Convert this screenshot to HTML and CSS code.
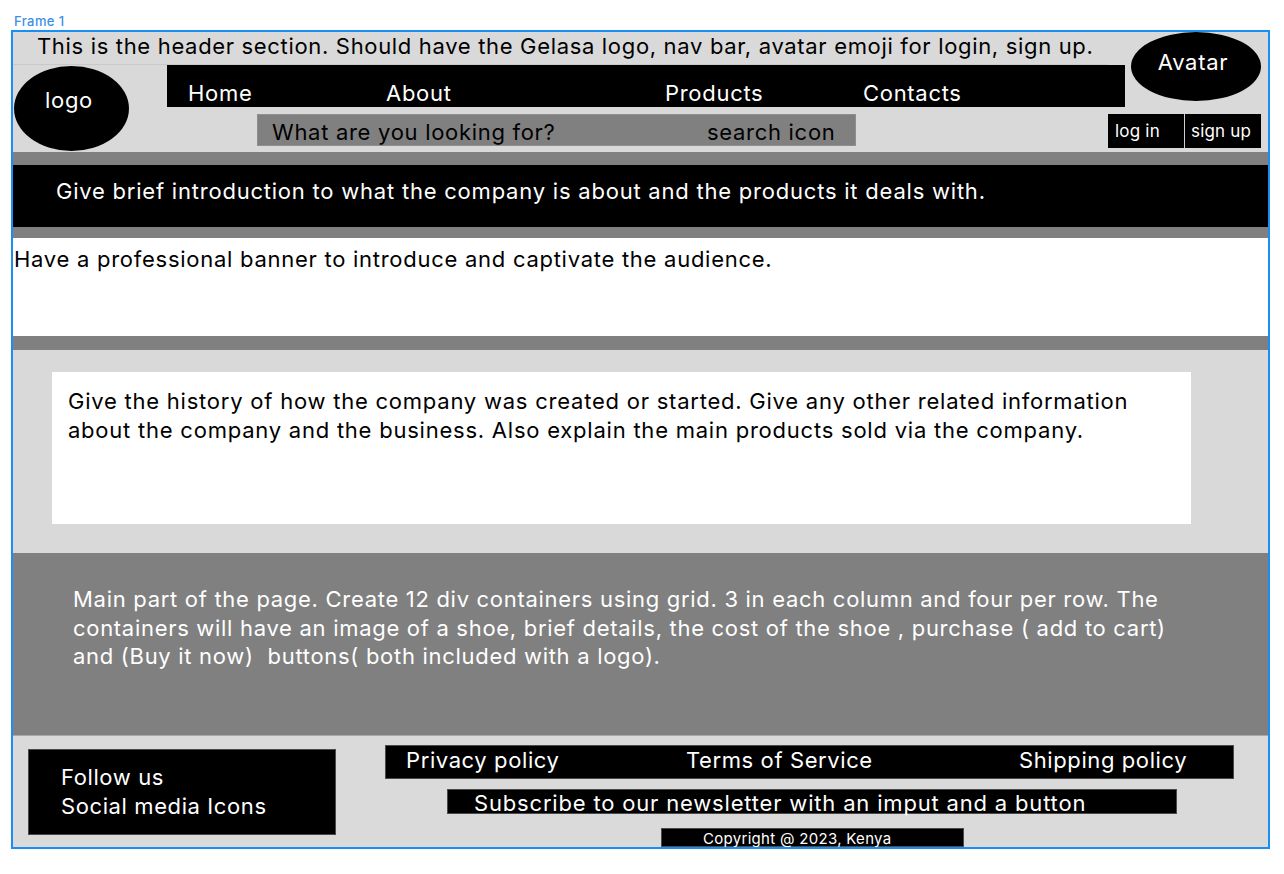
FILE: index.html
```html
<!DOCTYPE html>
<html lang="en">
<head>
<meta charset="utf-8">
<title>Frame 1</title>
<link rel="stylesheet" href="styles.css">
</head>
<body>
<div class="frame-label">Frame 1</div>
<div class="frame">
  <header class="header">
    <p class="header-note">This is the header section. Should have the Gelasa logo, nav bar, avatar emoji for login, sign up.</p>
    <div class="logo">logo</div>
    <nav class="nav">
      <a class="nav-link">Home</a>
      <a class="nav-link">About</a>
      <a class="nav-link">Products</a>
      <a class="nav-link">Contacts</a>
    </nav>
    <div class="search">
      <span class="search-text">What are you looking for?</span>
      <span class="search-icon">search icon</span>
    </div>
    <div class="avatar">Avatar</div>
    <div class="auth">
      <button class="auth-btn auth-login">log in</button>
      <button class="auth-btn auth-signup">sign up</button>
    </div>
  </header>

  <section class="hero">
    <div class="intro">Give brief introduction to what the company is about and the products it deals with.</div>
    <div class="banner">Have a professional banner to introduce and captivate the audience.</div>
  </section>

  <section class="history">
    <div class="history-card">Give the history of how the company was created or started. Give any other related information<br>about the company and the business. Also explain the main products sold via the company.</div>
  </section>

  <main class="main">
    <p class="main-text">Main part of the page. Create 12 div containers using grid. 3 in each column and four per row. The<br>containers will have an image of a shoe, brief details, the cost of the shoe , purchase ( add to cart)<br>and (Buy it now)  buttons( both included with a logo).</p>
  </main>

  <footer class="footer">
    <div class="follow">Follow us<br>Social media Icons</div>
    <div class="footer-right">
      <div class="links">
        <a class="link">Privacy policy</a>
        <a class="link">Terms of Service</a>
        <a class="link">Shipping policy</a>
      </div>
      <div class="subscribe">Subscribe to our newsletter with an imput and a button</div>
      <div class="copyright">Copyright @ 2023, Kenya</div>
    </div>
  </footer>
</div>
</body>
</html>
```

FILE: styles.css
```css
* { box-sizing: border-box; }

html, body {
  margin: 0;
  padding: 0;
  background: #ffffff;
}

body {
  font-family: Inter, "Noto Sans", sans-serif;
  font-size: 22px;
  letter-spacing: 0.7px;
  color: #000;
}

.frame-label {
  height: 30px;
  padding: 14px 0 0 14px;
  font-size: 13px;
  font-weight: 500;
  letter-spacing: 0.4px;
  line-height: 15px;
  color: #3d8fe6;
}

.frame {
  margin-left: 11px;
  width: 1259px;
  height: 819px;
  border: 2px solid #1b8ef2;
  display: flex;
  flex-direction: column;
  overflow: hidden;
}

/* Header */
.header {
  height: 120px;
  flex: none;
  background: #d9d9d9;
  display: grid;
  grid-template-columns: 154px 941px 17px 143px;
  grid-template-rows: 33px 42px 45px;
}

.header-note {
  grid-column: 1 / 3;
  grid-row: 1;
  margin: 0;
  padding: 1px 0 0 24px;
  white-space: nowrap;
  line-height: normal;
  letter-spacing: 0.67px;
  border-bottom: 1px solid #c9c9c9;
}

.logo {
  grid-column: 1;
  grid-row: 2 / 4;
  margin: 1px 0 0 1px;
  width: 115px;
  height: 85px;
  border-radius: 50%;
  background: #000;
  color: #fff;
  text-align: center;
  padding: 21px 5px 0 0;
}

.nav {
  grid-column: 2 / 4;
  grid-row: 2;
  background: #000;
  color: #fff;
  display: grid;
  grid-template-columns: 198px 279px 198px auto;
  align-items: end;
  padding: 0 0 1px 21px;
}

.nav-link {
  line-height: normal;
}

.search {
  grid-column: 2;
  grid-row: 3;
  margin: 7px 0 0 90px;
  width: 599px;
  height: 32px;
  background: #808080;
  border: 1px solid #8e8e8e;
  display: grid;
  grid-template-columns: 435px auto;
  padding: 4px 0 0 14px;
  line-height: 26px;
  color: #000;
}

.avatar {
  grid-column: 4;
  grid-row: 1 / 3;
  margin-left: 6px;
  width: 130px;
  height: 69px;
  border-radius: 50%;
  background: #000;
  color: #fff;
  text-align: center;
  padding: 17px 6px 0 0;
  line-height: normal;
}

.auth {
  grid-column: 3 / 5;
  grid-row: 3;
  margin-top: 7px;
  display: flex;
  height: 34px;
}

.auth-btn {
  font-family: Inter, "Noto Sans", sans-serif;
  font-size: 17px;
  letter-spacing: 0.2px;
  line-height: 34px;
  height: 34px;
  background: #000;
  color: #fff;
  border: 0;
  margin: 0;
  text-align: left;
}

.auth-login {
  width: 77px;
  padding: 0 0 0 7px;
  border-right: 1px solid #cfcfcf;
}

.auth-signup {
  width: 76px;
  padding: 0 0 0 6px;
}

/* Hero */
.hero {
  flex: none;
  height: 198px;
  background: #808080;
  padding: 13px 0 14px;
  display: flex;
  flex-direction: column;
  gap: 11px;
}

.intro {
  height: 62px;
  background: #000;
  color: #fff;
  padding: 13px 0 0 43px;
  line-height: normal;
  letter-spacing: 0.78px;
}

.banner {
  height: 98px;
  background: #fff;
  padding: 8px 0 0 1px;
  line-height: normal;
  letter-spacing: 0.73px;
}

/* History */
.history {
  flex: none;
  height: 203px;
  background: #d9d9d9;
  padding: 22px 0 0 39px;
}

.history-card {
  width: 1139px;
  height: 152px;
  background: #fff;
  padding: 15px 16px 0;
  line-height: 29px;
  letter-spacing: 0.77px;
}

/* Main */
.main {
  flex: none;
  height: 182px;
  background: #808080;
  padding: 32px 0 0 60px;
}

.main-text {
  margin: 0;
  color: #fff;
  line-height: 28.5px;
  white-space: pre-wrap;
}

/* Footer */
.footer {
  flex: none;
  height: 112px;
  background: #dadada;
  border-top: 1px solid #a9a9a9;
  display: flex;
  align-items: flex-start;
  letter-spacing: 0.6px;
}

.follow {
  margin: 13px 0 0 15px;
  width: 308px;
  height: 86px;
  background: #000;
  border: 1px solid #4a4a4a;
  color: #fff;
  padding: 13px 0 0 32px;
  line-height: 29px;
}

.footer-right {
  margin: 9px 0 0 49px;
  display: flex;
  flex-direction: column;
  align-items: flex-start;
}

.links {
  width: 849px;
  height: 34px;
  background: #000;
  border: 1px solid #4a4a4a;
  color: #fff;
  display: grid;
  grid-template-columns: 280px 333px auto;
  padding-left: 20px;
  line-height: 28px;
}

.subscribe {
  margin: 10px 0 0 62px;
  width: 730px;
  height: 25px;
  background: #000;
  border: 1px solid #4a4a4a;
  color: #fff;
  padding-left: 26px;
  line-height: 26px;
  letter-spacing: 0.82px;
  white-space: nowrap;
  overflow: visible;
}

.copyright {
  margin: 14px 0 0 276px;
  width: 303px;
  height: 19px;
  background: #000;
  border: 1px solid #4a4a4a;
  color: #fff;
  font-size: 15px;
  letter-spacing: 0.3px;
  line-height: 19px;
  padding-left: 41px;
}
```
